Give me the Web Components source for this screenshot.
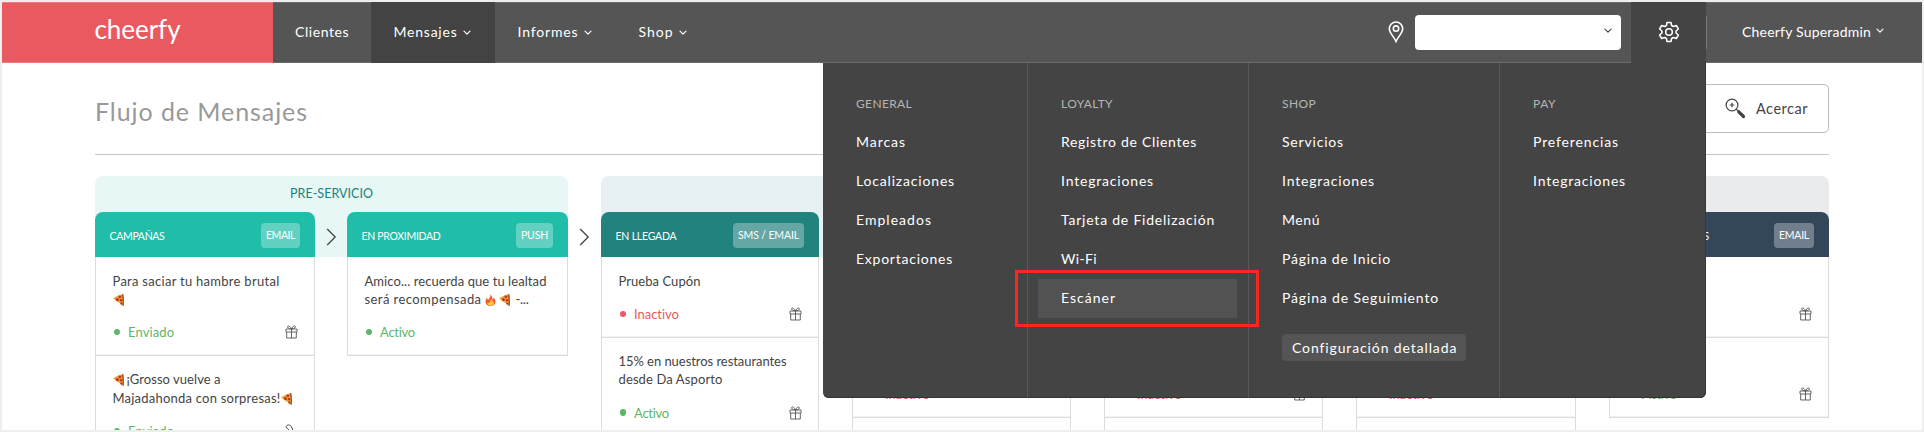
<!DOCTYPE html>
<html lang="es">
<head>
<meta charset="utf-8">
<title>Cheerfy – Flujo de Mensajes</title>
<style>
html,body{margin:0;padding:0;background:#eee}
body{font-family:Lato,"Noto Sans",sans-serif;color:#444;height:432px;overflow:hidden}
</style>
</head>
<body>
<app-shell>
  <top-bar slot="top">
    <nav-item style="--w:98px;--p:22px"><fit-text w="54">Clientes</fit-text></nav-item>
    <nav-item active chevron style="--w:124px;--p:22.500px"><fit-text w="64">Mensajes</fit-text></nav-item>
    <nav-item chevron style="--w:121px;--p:22.500px"><fit-text w="61">Informes</fit-text></nav-item>
    <nav-item chevron style="--w:90px;--p:22.500px"><fit-text w="35">Shop</fit-text></nav-item>
  </top-bar>
  <page-head slot="head"><fit-text w="213">Flujo de Mensajes</fit-text></page-head>
  <flow-board slot="board">
    <stage-group style="--w:473px;--bg:#e6f7f5;--gap:32px">
      <fit-text slot="title" w="83">PRE-SERVICIO</fit-text>
      <stage-column style="--w:220px;--c:#20bda8">
        <fit-text slot="name" w="55">CAMPAÑAS</fit-text><fit-text slot="tag" w="29">EMAIL</fit-text>
        <message-card state="Enviado" sw="46" icon="gift"><fit-text w="167">Para saciar tu hambre brutal</fit-text><br><emoji-icon name="pizza"></emoji-icon></message-card>
        <message-card state="Enviado" sw="46" icon="clip"><emoji-icon name="pizza"></emoji-icon><fit-text style="margin-left:3px" w="94">¡Grosso vuelve a</fit-text><br><fit-text w="168">Majadahonda con sorpresas!</fit-text><emoji-icon name="pizza"></emoji-icon></message-card>
      </stage-column>
      <stage-column style="--w:221px;--c:#20bda8">
        <fit-text slot="name" w="79">EN PROXIMIDAD</fit-text><fit-text slot="tag" w="27">PUSH</fit-text>
        <message-card state="Activo" sw="35"><fit-text w="182">Amico... recuerda que tu lealtad</fit-text><br><fit-text w="117" style="margin-right:3px">será recompensada</fit-text><emoji-icon name="fire"></emoji-icon><emoji-icon style="margin-left:3px" name="pizza"></emoji-icon><fit-text w="13" style="margin-left:6px">-...</fit-text></message-card>
      </stage-column>
    </stage-group>
    <stage-group style="--w:975px;--bg:#e7f0f2;--gap:33px">
      <stage-column style="--w:218px;--c:#21827e">
        <fit-text slot="name" w="61">EN LLEGADA</fit-text><fit-text slot="tag" w="61">SMS / EMAIL</fit-text>
        <message-card state="Inactivo" sw="45" icon="gift"><fit-text w="82">Prueba Cupón</fit-text></message-card>
        <message-card state="Activo" sw="35" icon="gift"><fit-text w="168">15% en nuestros restaurantes</fit-text><br><fit-text w="104">desde Da Asporto</fit-text></message-card>
      </stage-column>
      <stage-column style="--w:219px;--c:#21827e">
        <message-card>&nbsp;</message-card><message-card state="Inactivo" sw="45">&nbsp;</message-card><message-card>&nbsp;</message-card>
      </stage-column>
      <stage-column style="--w:219px;--c:#21827e">
        <message-card>&nbsp;</message-card><message-card state="Inactivo" sw="45" icon="gift">&nbsp;</message-card><message-card>&nbsp;</message-card>
      </stage-column>
      <stage-column style="--w:220px;--c:#21827e">
        <message-card>&nbsp;</message-card><message-card state="Inactivo" sw="45">&nbsp;</message-card><message-card>&nbsp;</message-card>
      </stage-column>
    </stage-group>
    <stage-group style="--w:220px;--bg:#e9ebed;--gap:32px">
      <stage-column style="--w:220px;--c:#34475a">
        <span slot="name" style="padding-left:80px">S</span><fit-text slot="tag" w="30">EMAIL</fit-text>
        <message-card icon="gift">&nbsp;</message-card><message-card state="Activo" sw="35" icon="gift">&nbsp;</message-card>
      </stage-column>
    </stage-group>
  </flow-board>
  <settings-menu slot="menu">
    <menu-section style="--w:205px;--p:33px">
      <fit-text slot="title" w="56">GENERAL</fit-text>
      <menu-link><fit-text w="50">Marcas</fit-text></menu-link>
      <menu-link><fit-text w="99">Localizaciones</fit-text></menu-link>
      <menu-link><fit-text w="76">Empleados</fit-text></menu-link>
      <menu-link><fit-text w="97">Exportaciones</fit-text></menu-link>
    </menu-section>
    <menu-section style="--w:221px;--p:33px">
      <fit-text slot="title" w="52">LOYALTY</fit-text>
      <menu-link><fit-text w="136">Registro de Clientes</fit-text></menu-link>
      <menu-link><fit-text w="93">Integraciones</fit-text></menu-link>
      <menu-link><fit-text w="154">Tarjeta de Fidelización</fit-text></menu-link>
      <menu-link><fit-text w="36">Wi-Fi</fit-text></menu-link>
      <menu-link active><fit-text w="55">Escáner</fit-text></menu-link>
    </menu-section>
    <menu-section style="--w:251px;--p:33px">
      <fit-text slot="title" w="34">SHOP</fit-text>
      <menu-link><fit-text w="62">Servicios</fit-text></menu-link>
      <menu-link><fit-text w="93">Integraciones</fit-text></menu-link>
      <menu-link><fit-text w="38">Menú</fit-text></menu-link>
      <menu-link><fit-text w="109">Página de Inicio</fit-text></menu-link>
      <menu-link><fit-text w="157">Página de Seguimiento</fit-text></menu-link>
      <menu-button><fit-text w="165">Configuración detallada</fit-text></menu-button>
    </menu-section>
    <menu-section last style="--w:206px;--p:33px">
      <fit-text slot="title" w="23">PAY</fit-text>
      <menu-link><fit-text w="86">Preferencias</fit-text></menu-link>
      <menu-link><fit-text w="93">Integraciones</fit-text></menu-link>
    </menu-section>
  </settings-menu>
</app-shell>
<script>
const define = (name, html, setup) => {
  const t = document.createElement('template');
  t.innerHTML = html;
  customElements.define(name, class extends HTMLElement {
    constructor() {
      super();
      this.attachShadow({mode: 'open'}).append(t.content.cloneNode(true));
    }
    connectedCallback() { if (setup) setup(this, this.shadowRoot); }
  });
};
const chevron = (c, w = 8) => `<svg width="${w}" height="6" viewBox="0 0 8 6" fill="none" stroke="${c}" stroke-width="1.2" stroke-linecap="round" stroke-linejoin="round"><path d="M1 1.2 4 4.2 7 1.2"/></svg>`;

define('app-shell', `<style>
:host{display:block;box-sizing:border-box;position:relative;width:1924px;height:432px;border:2px solid #eee;background:#fff;overflow:hidden}
.menu{position:absolute;left:821px;top:61px}
.mark{position:absolute;left:1013px;top:268px;width:238px;height:51px;border:3px solid #f9281c}
</style><slot name="top"></slot><slot name="head"></slot><slot name="board"></slot><div class="menu"><slot name="menu"></slot></div><div class="mark"></div>`);

define('top-bar', `<style>
:host{display:flex;height:61px;background:#555;color:#fff;align-items:stretch;font-size:14px;box-shadow:inset 0 1px #6a6a6a,inset 0 -1px #6a6a6a}
.logo{width:271px;background:#e85a60;box-sizing:border-box;padding:9px 0 0 92.5px;font-size:26px;line-height:36px;box-shadow:inset 0 1px #ed7b80,inset 0 -1px #ed7b80}
nav{display:flex}.grow{flex:1}
.pin{display:flex;align-items:center;width:27px;padding-bottom:1px}
.select{align-self:center;width:206px;height:35px;box-sizing:border-box;background:#fff;border-radius:4px;display:flex;align-items:center;justify-content:flex-end;padding:0 9px 2px 0;margin:0 10px 1px 0}
.gear{width:75px;background:#444;box-sizing:border-box;display:flex;align-items:center;padding:0 0 2px 27px}
.user{width:215px;box-sizing:border-box;display:flex;align-items:center;gap:5px;padding:0 0 2px 35px}
.user svg{margin-bottom:1px}
.rule{align-self:center;width:1px;height:33px;background:#777}
</style><div class="logo"><fit-text w="86">cheerfy</fit-text></div><nav><slot></slot></nav><div class="grow"></div>
<div class="pin"><svg width="16" height="22" viewBox="0 0 16 22" fill="none" stroke="#fff" stroke-width="1.6"><path d="M8 20.5C6.3 16.3 1.3 11.800 1.3 7.700a6.700 6.700 0 0 1 13.400 0C14.700 11.800 9.700 16.300 8 20.500Z"/><circle cx="8" cy="7.600" r="2.700"/></svg></div>
<div class="select">${chevron('#444')}</div>
<div class="gear"><svg width="22" height="22" viewBox="0 0 24 24" fill="none" stroke="#fff" stroke-width="1.700" stroke-linejoin="round"><circle cx="12" cy="12" r="3.600"/><path d="M9.800 1.700h4.400l.6 3.200 2 1.100 3.200-1.100 2.200 3.800-2.500 2.200v2.200l2.500 2.200-2.200 3.800-3.200-1.100-2 1.100-.6 3.200H9.800l-.6-3.200-2-1.100L4 19.100l-2.200-3.800 2.500-2.200v-2.200L1.800 8.700 4 4.900 7.200 6l2-1.100Z"/></svg></div>
<div class="rule"></div><div class="user"><fit-text w="129">Cheerfy Superadmin</fit-text>${chevron('#fff')}</div>`);

define('nav-item', `<style>
:host{display:flex;width:var(--w);box-sizing:border-box;padding:0 0 3px var(--p);align-items:center;gap:5px}
:host([active]){background:#434343}
svg{display:none;margin-top:4px}:host([chevron]) svg{display:block}
</style><slot></slot>${chevron('#fff')}`);

define('page-head', `<style>
:host{display:flex;height:91px;margin:0 93px;border-bottom:1px solid #c6c6c6;box-sizing:content-box;justify-content:space-between}
h1{margin:0;font-weight:400;font-size:25px;line-height:36px;color:#999;padding-top:30px}
.btn{align-self:flex-start;margin-top:21px;box-sizing:border-box;width:134px;height:49px;border:1px solid #bbb;border-radius:5px;display:flex;align-items:center;gap:10px;padding-left:29px;font-size:14.500px;color:#444}
</style><h1><slot></slot></h1><div class="btn"><svg width="21" height="21" viewBox="0 0 21 21" fill="none" stroke="#444"><circle cx="7" cy="7" r="5.900" stroke-width="1.200"/><path d="M7 4.700v4.600M4.700 7h4.600" stroke-width="1.200"/><path d="m11.200 11.200 2.500 2.500" stroke-width="1.200"/><path d="m13.800 13.800 4.700 4.700" stroke-width="3.200" stroke-linecap="round"/></svg><fit-text w="52">Acercar</fit-text></div>`);

define('flow-board', `<style>:host{display:flex;gap:33px;margin:21px 93px 0;align-items:flex-start}</style><slot></slot>`);

define('stage-group', `<style>
:host{display:block;flex:none;width:var(--w)}
.band{height:81px;margin-bottom:-45px;box-sizing:border-box;border-radius:8px 8px 0 0;background:var(--bg);color:#22807b;font-size:12.500px;line-height:35px;text-align:center}
.cols{display:flex;gap:var(--gap);align-items:flex-start}
</style><div class="band"><slot name="title"></slot></div><div class="cols"><slot></slot></div>`);

define('stage-column', `<style>
:host{display:block;flex:none;width:var(--w);position:relative}
header{height:45px;box-sizing:border-box;background:var(--c);border-radius:8px 8px 0 0;color:#fff;font-size:10.500px;display:flex;align-items:center;justify-content:space-between;padding:2px 15px 0 14.500px;line-height:14px}
.tag{background:rgba(255,255,255,.3);border-radius:4px;padding:5px 5px 6px;height:14px}
svg{position:absolute;left:100%;top:16px;margin-left:11px}
:host(:last-child) svg{display:none}
</style><header><slot name="name"></slot><span class="tag"><slot name="tag"></slot></span></header>
<svg width="11" height="18" viewBox="0 0 11 18" fill="none" stroke="#444" stroke-width="1.300"><path d="m1.200 1 8 8-8 8"/></svg>
<slot></slot>`, (el, root) => {
  const group = el.parentElement;
  if (el !== group.lastElementChild || group.previousElementSibling) return;
  root.querySelector('svg').style.display = 'block';
});

const gift = `<svg width="13" height="14" viewBox="0 0 13 14" fill="none" stroke="#555" stroke-width=".9"><path d="M1 4h11v3H1ZM1.700 7v6h9.600V7M6.500 4v9M6.500 3.800C5 1 3.300.2 2.700 1.400 2.200 2.600 3.500 3.600 6.500 3.800ZM6.500 3.800C8 1 9.700.2 10.300 1.400 10.800 2.600 9.500 3.600 6.500 3.800Z"/></svg>`;
const clip = `<svg width="13" height="14" viewBox="0 0 13 14" fill="none" stroke="#555" stroke-width="1"><path d="M1 3.200C1 1 4.500 0 6 2l1.500 3v6M1 3.200 4 6"/></svg>`;
define('message-card', `<style>
:host{display:block;box-sizing:border-box;border:1px solid #dcdcdc;border-top:0;padding:14.500px 0 12.700px 16.500px;background:#fff;font-size:13px;color:#444;box-shadow:inset 0 -1px #f3f3f3}
.text{line-height:18.300px;white-space:nowrap}
.row{display:flex;height:20px;line-height:20px;margin-top:14.100px;align-items:center;color:#5fb56a}
.row.off{color:#e85a60}
i{width:6.600px;height:6.600px;border-radius:50%;background:currentColor;margin:0 8px 0 1px}
.icon{margin-left:auto;width:13px;height:14px;margin-right:16px}
.icon svg{display:block}
</style><div class="text"><slot></slot></div><div class="row"></div>`, (el, root) => {
  const row = root.querySelector('.row'), s = el.getAttribute('state');
  const ic = {gift, clip}[el.getAttribute('icon')] || '';
  row.classList.toggle('off', s === 'Inactivo');
  row.innerHTML = (s ? `<i></i><fit-text w="${el.getAttribute('sw')}">${s}</fit-text>` : '') + `<span class="icon">${ic}</span>`;
});

define('emoji-icon', `<style>:host{display:inline-block;width:11px;height:12px;vertical-align:-2px}svg{display:block}</style><svg width="11" height="12" viewBox="0 0 11 12"></svg>`, (el, root) => {
  root.querySelector('svg').innerHTML = el.getAttribute('name') === 'pizza'
    ? `<path d="M.1 4.300Q5 .8 10 .2Q11.200 6 10.600 12Q8.500 12 7.500 9.600L4.500 8Z" fill="#eda63c"/><path d="M8.600.4 10.300.1Q11.500 6 10.700 12L9.400 11.400Q10 5 8.600.4Z" fill="#a75a20"/><circle cx="6.900" cy="2.800" r="1.400" fill="#c5321c"/><circle cx="4.400" cy="5.500" r="1.500" fill="#c5321c"/><circle cx="8" cy="6.300" r="1.300" fill="#c5321c"/><circle cx="8.300" cy="9.600" r="1.100" fill="#b52a1a"/>`
    : `<path d="M5.200.2C7.500 2 6.800 4 8 5.400 8.500 4.800 8.500 4 8.500 3.400 10.500 5.500 11 7.600 10 9.600 9 11.400 7.300 12 5.500 12 3 12 .5 10.500.5 7.700.5 6 1.400 5 1.800 3.800 2.600 4.500 2.700 5.200 2.900 5.900 4.800 4.300 5.700 2.300 5.200.2Z" fill="#f5562b"/><path d="M6 4.500C7.500 6.500 9.200 7.600 8.800 9.500 8.300 11.300 6.900 11.900 5.500 11.900 3.900 11.900 2.200 10.800 2.300 8.600 3.200 9.300 3.500 9.200 3.900 8.800 5.300 7.700 5.900 6.500 6 4.500Z" fill="#ffc23c"/>`;
});

define('settings-menu', `<style>:host{display:flex;width:883px;height:335px;background:#444;border-radius:0 0 6px 6px;color:#fff;box-shadow:inset 0 -1px #333,inset -1px 0 #393939;overflow:hidden}</style><slot></slot>`);

define('menu-section', `<style>
:host{display:block;flex:none;box-sizing:border-box;width:var(--w);padding:32px 0 0 var(--p);border-right:1px solid #585858}
:host([last]){border-right:0}
.t{font-size:12px;line-height:17px;color:#b5b5b5;margin-bottom:10px}
</style><div class="t"><slot name="title"></slot></div><slot></slot>`);

define('menu-link', `<style>
:host{display:block;box-sizing:border-box;height:39px;line-height:39px;font-size:14px}
:host([active]){background:#525252;margin:0 11px 0 -23px;padding-left:23px;line-height:38px;height:39px;position:relative;top:1px;line-height:37px}
</style><slot></slot>`);

define('menu-button', `<style>
:host{display:block;box-sizing:border-box;width:184px;height:27px;line-height:27px;margin-top:17px;padding-left:10px;border-radius:4px;background:#555;font-size:14px}
</style><slot></slot>`);

/* Keeps a label at its design width by distributing the difference as tracking. */
define('fit-text', `<style>:host{display:inline-block;white-space:nowrap}</style><slot></slot>`, el => {
  const n = [...el.textContent].length, w = +el.getAttribute('w');
  const natural = el.getBoundingClientRect().width;
  if (natural) el.style.letterSpacing = ((w - natural) / n).toFixed(3) + 'px';
});
</script>
</body>
</html>
